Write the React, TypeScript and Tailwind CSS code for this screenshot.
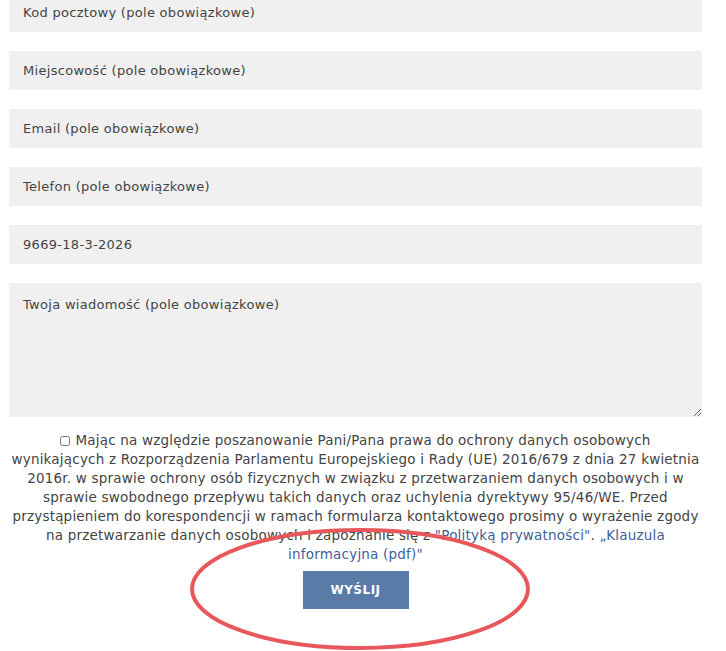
import { useState } from 'react';

const font = { fontFamily: '"DejaVu Sans", "Noto Sans", sans-serif' };

const fields = [
  'Kod pocztowy (pole obowiązkowe)',
  'Miejscowość (pole obowiązkowe)',
  'Email (pole obowiązkowe)',
  'Telefon (pole obowiązkowe)',
];

export default function App() {
  const [agree, setAgree] = useState(false);

  return (
    <div className="relative min-h-[651px] bg-white overflow-hidden" style={font}>
      <form className="-mt-[7px] px-[9px] w-[711px] flex flex-col gap-[19px] text-[13px] text-[#444]">
        {fields.map((f) => (
          <input
            key={f}
            placeholder={f}
            className="h-[39px] w-full bg-[#f0f0f0] px-[14px] tracking-[0.3px] placeholder:text-[#444] outline-none"
          />
        ))}
        <input
          defaultValue="9669-18-3-2026"
          className="h-[39px] w-full bg-[#f0f0f0] px-[14px] tracking-[0.3px] text-[#444] outline-none"
        />
        <textarea
          placeholder="Twoja wiadomość (pole obowiązkowe)"
          className="h-[134px] w-full bg-[#f0f0f0] px-[14px] pt-[12px] tracking-[0.3px] placeholder:text-[#444] outline-none"
        />
        <p className="-mt-[5px] text-center text-[13.5px] leading-[19px] tracking-[0.2px] text-[#444] whitespace-nowrap">
          <input
            type="checkbox"
            checked={agree}
            onChange={(e) => setAgree(e.target.checked)}
            className="mr-[5px] align-[-1px] w-[10px] h-[10px]"
          />
          Mając na względzie poszanowanie Pani/Pana prawa do ochrony danych osobowych
          <br />
          wynikających z Rozporządzenia Parlamentu Europejskiego i Rady (UE) 2016/679 z dnia 27 kwietnia
          <br />
          2016r. w sprawie ochrony osób fizycznych w związku z przetwarzaniem danych osobowych i w
          <br />
          sprawie swobodnego przepływu takich danych oraz uchylenia dyrektywy 95/46/WE. Przed
          <br />
          przystąpieniem do korespondencji w ramach formularza kontaktowego prosimy o wyrażenie zgody
          <br />
          na przetwarzanie danych osobowych i zapoznanie się z{' '}
          <a href="#" className="text-[#3d6198]">"Polityką prywatności"</a>.{' '}
          <a href="#" className="text-[#3d6198]">
            „Klauzula
            <br />
            informacyjna (pdf)"
          </a>
        </p>
        <div className="-mt-[12px] flex justify-center">
          <button
            type="button"
            className="h-[38px] w-[106px] bg-[#587ba8] text-white text-[12px] font-bold tracking-[0.5px]"
          >
            WYŚLIJ
          </button>
        </div>
      </form>

      {/* annotation ellipse */}
      <svg className="absolute left-0 top-0 pointer-events-none" width="726" height="651">
        <ellipse cx="360" cy="589" rx="168" ry="59" fill="none" stroke="#e8585a" strokeWidth="4" />
      </svg>
    </div>
  );
}
